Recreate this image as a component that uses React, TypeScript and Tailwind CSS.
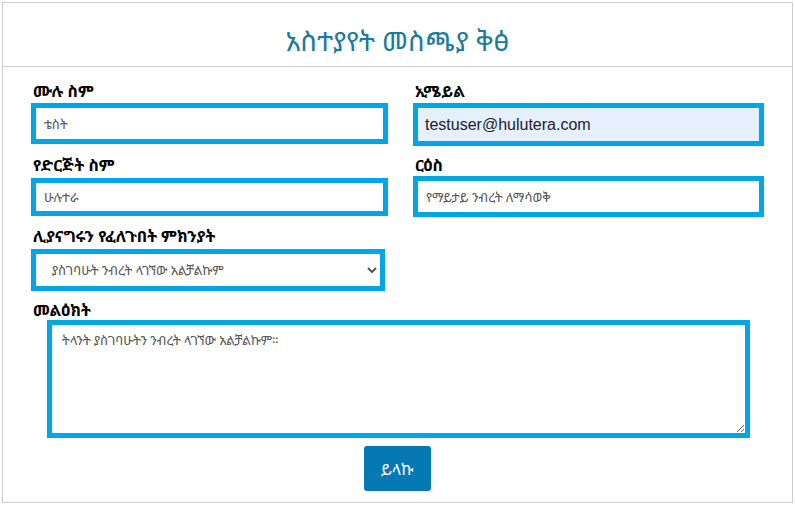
const ethi = "font-['Noto_Sans_Ethiopic','Abyssinica_SIL','DejaVu_Sans','Noto_Sans',sans-serif]";

function Field({
  label,
  className,
  children,
}: {
  label: string;
  className?: string;
  children: React.ReactNode;
}) {
  return (
    <div className={className}>
      <label className={`block pl-[2px] text-[16px] leading-[22px] font-bold text-black ${ethi}`}>
        {label}
      </label>
      {children}
    </div>
  );
}

const inputCls =
  "block w-full border-[5px] border-[#00a6e6] bg-white px-[8px] text-[13px] text-[#555] outline-none";

export default function App() {
  return (
    <div className="p-[2px] bg-white">
      <div className="w-[791px] h-[501px] border border-[#ccc] bg-white">
        <header className="h-[64px] border-b border-[#ccc] flex items-center justify-center">
          <h1 className={`text-[27px] leading-none text-[#1a7b9c] pt-[12px] ${ethi}`}>
            አስተያየት መስጫያ ቅፅ
          </h1>
        </header>

        <form className="pl-[28px] pt-[13px]">
          <div className="flex gap-[25px] items-start">
            <Field label="ሙሉ ስም" className="w-[357px]">
              <input
                defaultValue="ቴስት"
                className={`${inputCls} h-[41px] mt-[1px] ${ethi}`}
              />
            </Field>
            <Field label="ኢሜይል" className="w-[351px]">
              <input
                defaultValue="testuser@hulutera.com"
                className="block w-full h-[43px] mt-[1px] border-[5px] border-[#00a6e6] bg-[#e6f0fd] px-[7px] text-[16px] text-[#222] outline-none font-['Liberation_Sans',Arial,sans-serif]"
              />
            </Field>
          </div>

          <div className="flex gap-[25px] mt-[8px] items-start">
            <Field label="የድርጅት ስም" className="w-[357px]">
              <input
                defaultValue="ሁሉተራ"
                className={`${inputCls} h-[38px] mt-[2px] ${ethi}`}
              />
            </Field>
            <Field label="ርዕስ" className="w-[351px]">
              <input
                defaultValue="የማይታይ ንብረት ለማሳወቅ"
                className={`${inputCls} h-[41px] mt-0 ${ethi}`}
              />
            </Field>
          </div>

          <Field label="ሊያናግሩን የፈለጉበት ምክንያት" className="w-[354px] mt-[8px]">
            <select
              defaultValue="a"
              className={`block w-full h-[42px] mt-[2px] border-[5px] border-[#00a6e6] bg-white pl-[12px] pr-[6px] text-[13px] text-[#555] outline-none ${ethi}`}
            >
              <option value="a">ያስገባሁት ንብረት ላገኘው አልቻልኩም</option>
            </select>
          </Field>

          <Field label="መልዕክት" className="mt-[8px]">
            <textarea
              defaultValue="ትላንት ያስገባሁትን ንብረት ላገኘው አልቻልኩም።"
              className={`block ml-[16px] w-[703px] h-[118px] mt-[-1px] border-[5px] border-[#00a6e6] bg-white px-[10px] py-[6px] text-[13px] text-[#555] outline-none ${ethi}`}
            />
          </Field>

          <div className="flex justify-center pr-[29px] mt-[8px]">
            <button
              type="button"
              className={`w-[67px] h-[45px] rounded-[3px] bg-[#0479b4] text-white text-[16px] ${ethi}`}
            >
              ይላኩ
            </button>
          </div>
        </form>
      </div>
    </div>
  );
}
